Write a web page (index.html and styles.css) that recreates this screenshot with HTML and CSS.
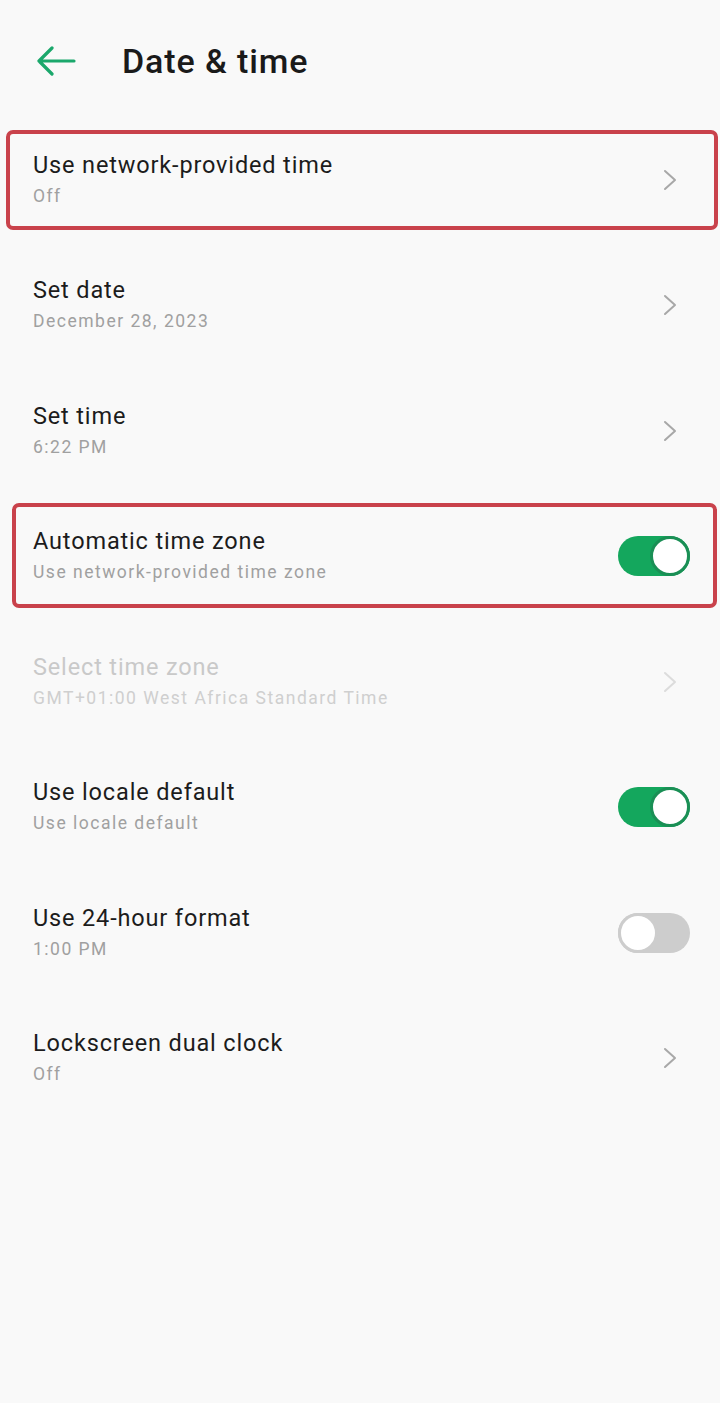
FILE: index.html
```html
<!DOCTYPE html>
<html>
<head>
<meta charset="utf-8">
<link rel="stylesheet" href="styles.css">
</head>
<body>
<div class="page">
  <header class="header">
    <svg class="back" width="40" height="30" viewBox="0 0 40 30">
      <path d="M38 15 H3 M16 2 L3 15 L16 28" fill="none" stroke="#1ba86c" stroke-width="3.2" stroke-linecap="round" stroke-linejoin="round"/>
    </svg>
    <h1 class="title">Date &amp; time</h1>
  </header>
  <div class="list">
    <div class="row">
      <div class="text"><div class="label">Use network-provided time</div><div class="sub">Off</div></div>
      <svg class="chev" width="14" height="22" viewBox="0 0 14 22"><path d="M2 2 L12 11 L2 20" fill="none" stroke="#a8a8a8" stroke-width="2" stroke-linecap="round" stroke-linejoin="round"/></svg>
      <div class="mark mark1"></div>
    </div>
    <div class="row">
      <div class="text"><div class="label">Set date</div><div class="sub">December 28, 2023</div></div>
      <svg class="chev" width="14" height="22" viewBox="0 0 14 22"><path d="M2 2 L12 11 L2 20" fill="none" stroke="#a8a8a8" stroke-width="2" stroke-linecap="round" stroke-linejoin="round"/></svg>
    </div>
    <div class="row">
      <div class="text"><div class="label">Set time</div><div class="sub">6:22 PM</div></div>
      <svg class="chev" width="14" height="22" viewBox="0 0 14 22"><path d="M2 2 L12 11 L2 20" fill="none" stroke="#a8a8a8" stroke-width="2" stroke-linecap="round" stroke-linejoin="round"/></svg>
    </div>
    <div class="row">
      <div class="text"><div class="label">Automatic time zone</div><div class="sub">Use network-provided time zone</div></div>
      <div class="toggle on"><div class="knob"></div></div>
      <div class="mark mark2"></div>
    </div>
    <div class="row disabled">
      <div class="text"><div class="label">Select time zone</div><div class="sub">GMT+01:00 West Africa Standard Time</div></div>
      <svg class="chev" width="14" height="22" viewBox="0 0 14 22"><path d="M2 2 L12 11 L2 20" fill="none" stroke="#dcdcdc" stroke-width="2" stroke-linecap="round" stroke-linejoin="round"/></svg>
    </div>
    <div class="row">
      <div class="text"><div class="label">Use locale default</div><div class="sub">Use locale default</div></div>
      <div class="toggle on"><div class="knob"></div></div>
    </div>
    <div class="row">
      <div class="text"><div class="label">Use 24-hour format</div><div class="sub">1:00 PM</div></div>
      <div class="toggle off"><div class="knob"></div></div>
    </div>
    <div class="row">
      <div class="text"><div class="label">Lockscreen dual clock</div><div class="sub">Off</div></div>
      <svg class="chev" width="14" height="22" viewBox="0 0 14 22"><path d="M2 2 L12 11 L2 20" fill="none" stroke="#a8a8a8" stroke-width="2" stroke-linecap="round" stroke-linejoin="round"/></svg>
    </div>
  </div>
</div>
</body>
</html>
```

FILE: styles.css
```css
* { box-sizing: border-box; margin: 0; padding: 0; }
html, body { background: #f9f9f9; }
body { font-family: Roboto, "Noto Sans", sans-serif; color: #1c1c1c; }
.page { width: 720px; height: 1403px; background: #f9f9f9; }
.header { height: 117px; display: flex; align-items: center; padding-left: 36px; padding-top: 4px; }
.back { display: block; }
.title { font-size: 34px; font-weight: 500; margin-left: 46px; color: #1a1a1a; letter-spacing: 0.9px; }
.list { display: flex; flex-direction: column; }
.row { position: relative; height: 125.5px; display: flex; align-items: center; justify-content: space-between; padding-left: 33px; padding-right: 30px; }
.text { display: flex; flex-direction: column; gap: 6px; }
.label { font-size: 23.5px; color: #1c1c1c; line-height: 28px; letter-spacing: 0.85px; margin-top: -2px; }
.sub { font-size: 17.5px; color: #a0a0a0; line-height: 22px; letter-spacing: 1.5px; }
.disabled .label { color: #c9c9c9; }
.disabled .sub { color: #cfcfcf; }
.chev { margin-right: 13px; }
.toggle { width: 72px; height: 40px; border-radius: 20px; position: relative; }
.toggle.on { background: #14a75d; }
.toggle.off { background: #cdcdcd; }
.knob { position: absolute; top: 0; width: 40px; height: 40px; border-radius: 50%; background: #fff; }
.on .knob { right: 0; border: 3px solid #1a8f55; }
.off .knob { left: 0; border: 3px solid #cdcdcd; }
.mark { position: absolute; border: 4px solid #c9424b; border-radius: 7px; pointer-events: none; }
.mark1 { left: 6px; right: 2px; top: 13px; height: 100px; }
.mark2 { left: 12px; right: 3px; top: 9px; height: 105px; }
```
